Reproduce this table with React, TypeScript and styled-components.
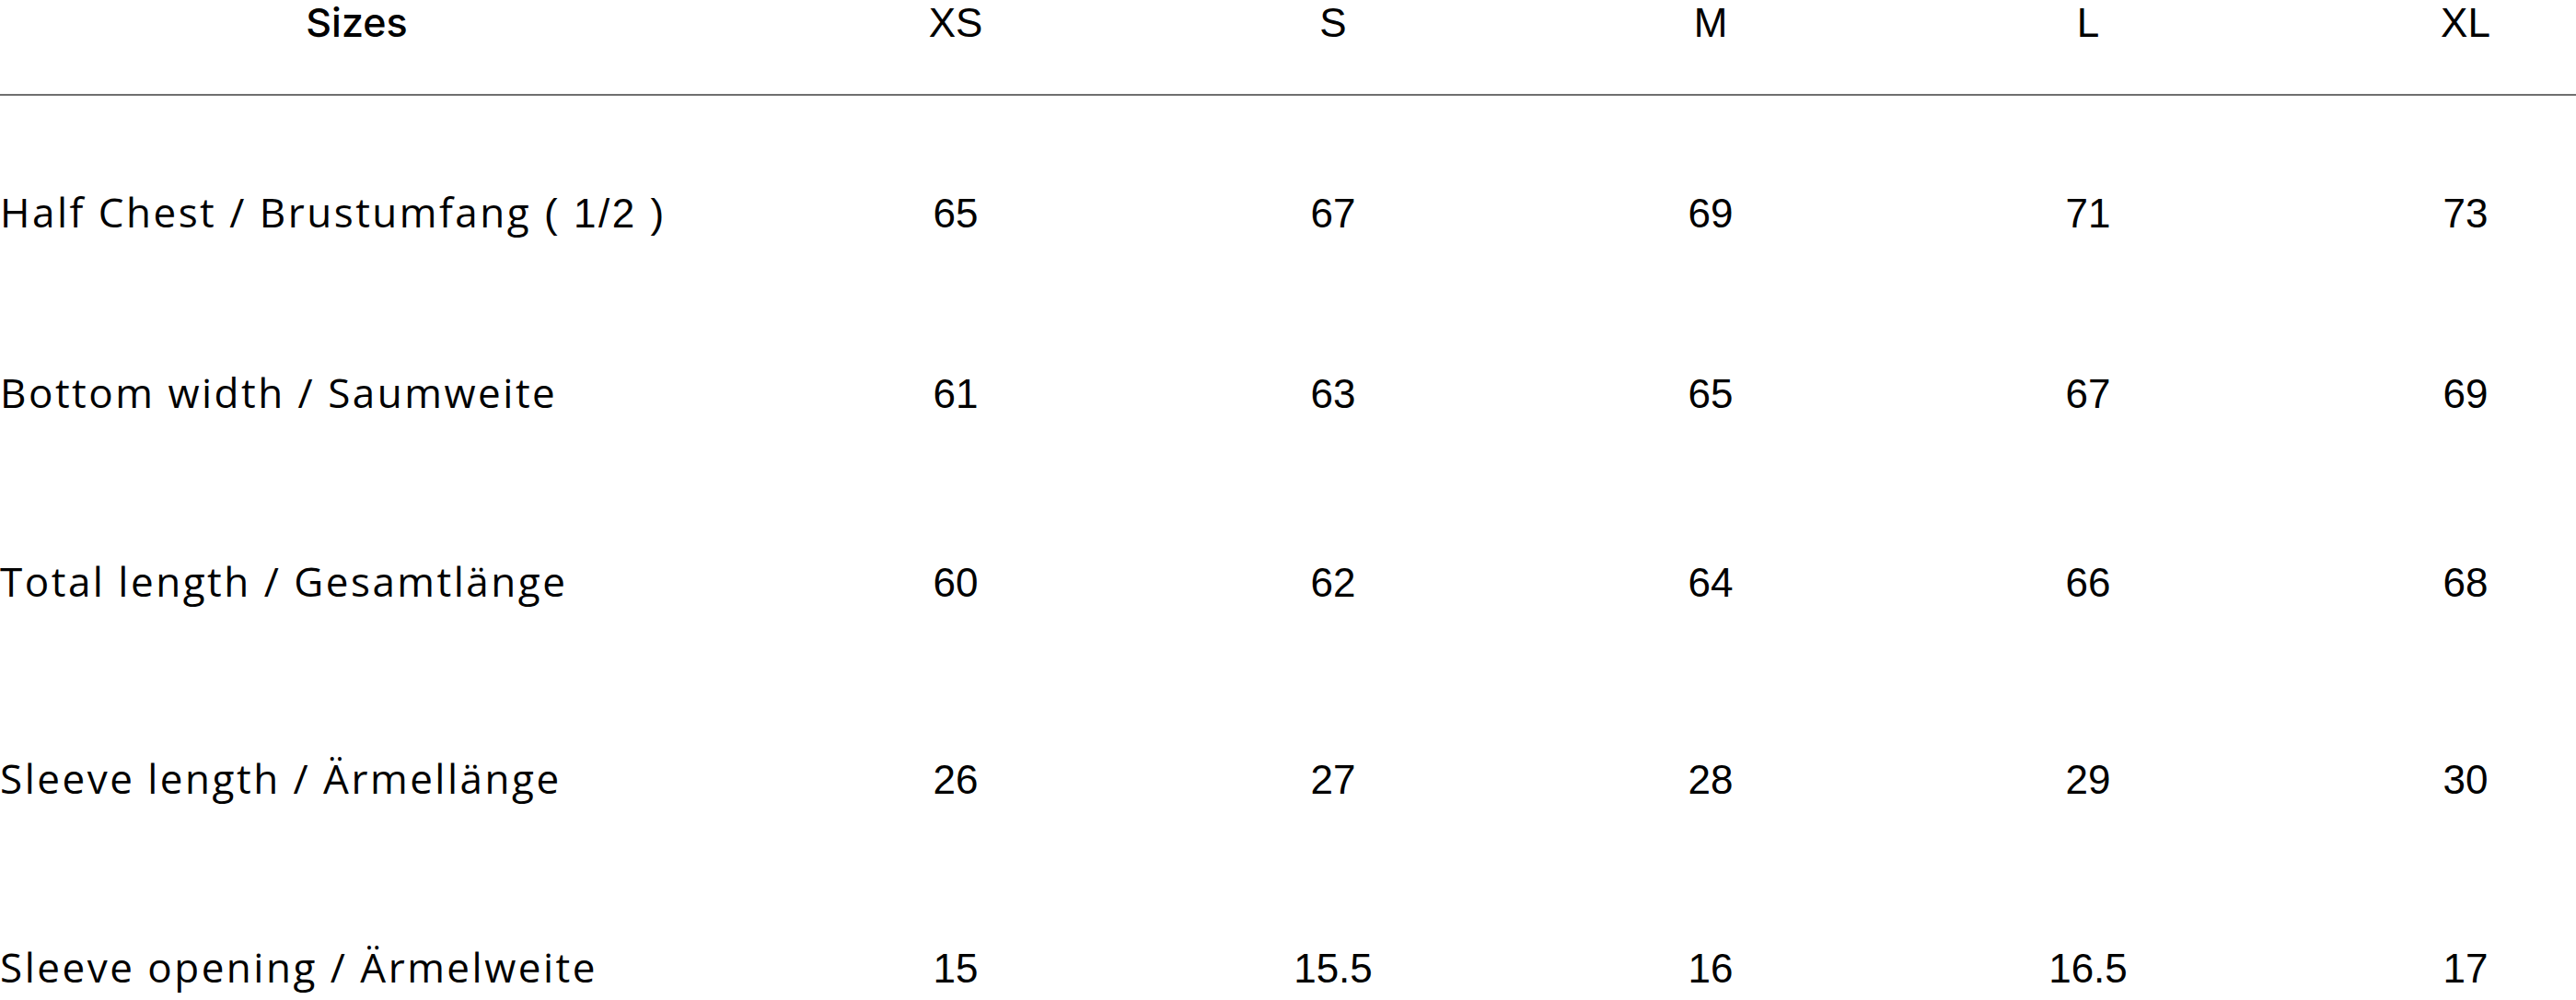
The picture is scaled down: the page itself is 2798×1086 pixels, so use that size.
import React from 'react'
import styled, { createGlobalStyle } from 'styled-components'

const GlobalStyle = createGlobalStyle`
  html, body {
    margin: 0;
    padding: 0;
    background: #fff;
    overflow: hidden;
  }
`

const Table = styled.div`
  width: 100%;
  color: #000;
  font-family: "Liberation Sans", Arial, sans-serif;
  font-size: 44px;
  line-height: 44px;
`

const HeaderRow = styled.div`
  display: grid;
  grid-template-columns: 833px repeat(5, 410px);
  align-items: baseline;
  height: 104px;
  padding-top: 2px;
  border-bottom: 2px solid #6f6f6f;
  box-sizing: border-box;
`

const HeadLabel = styled.div`
  padding-right: 58px;
  text-align: center;
  font-family: Inter, "Open Sans", sans-serif;
  font-size: 43px;
  font-weight: 500;
`

const HeadCell = styled.div`
  text-align: center;
`

const Body = styled.div`
  display: flex;
  flex-direction: column;
  padding-top: 104px;
`

const Row = styled.div<{ $h: number }>`
  display: grid;
  grid-template-columns: 833px repeat(5, 410px);
  align-items: baseline;
  height: ${(p) => p.$h}px;
`

const Label = styled.div`
  font-family: "Open Sans", sans-serif;
  letter-spacing: 2.5px;
  white-space: nowrap;
`

const Digits = styled.span`
  font-family: "Liberation Sans", Arial, sans-serif;
`

const Cell = styled.div`
  text-align: center;
`

const sizes = ['XS', 'S', 'M', 'L', 'XL']

const rows = [
  { label: 'Half Chest / Brustumfang ', extra: '( 1/2 )', values: ['65', '67', '69', '71', '73'], h: 196 },
  { label: 'Bottom width / Saumweite', values: ['61', '63', '65', '67', '69'], h: 205 },
  { label: 'Total length / Gesamtlänge', values: ['60', '62', '64', '66', '68'], h: 214 },
  { label: 'Sleeve length / Ärmellänge', values: ['26', '27', '28', '29', '30'], h: 205 },
  { label: 'Sleeve opening / Ärmelweite', values: ['15', '15.5', '16', '16.5', '17'], h: 60 },
]

export default function App () {
  return (
    <>
      <GlobalStyle />
      <Table>
        <HeaderRow>
          <HeadLabel>Sizes</HeadLabel>
          {sizes.map((s) => (
            <HeadCell key={s}>{s}</HeadCell>
          ))}
        </HeaderRow>
        <Body>
          {rows.map((row) => (
            <Row key={row.label} $h={row.h}>
              <Label>
                {row.label}
                {row.extra && <Digits>{row.extra}</Digits>}
              </Label>
              {row.values.map((v, i) => (
                <Cell key={i}>{v}</Cell>
              ))}
            </Row>
          ))}
        </Body>
      </Table>
    </>
  )
}
